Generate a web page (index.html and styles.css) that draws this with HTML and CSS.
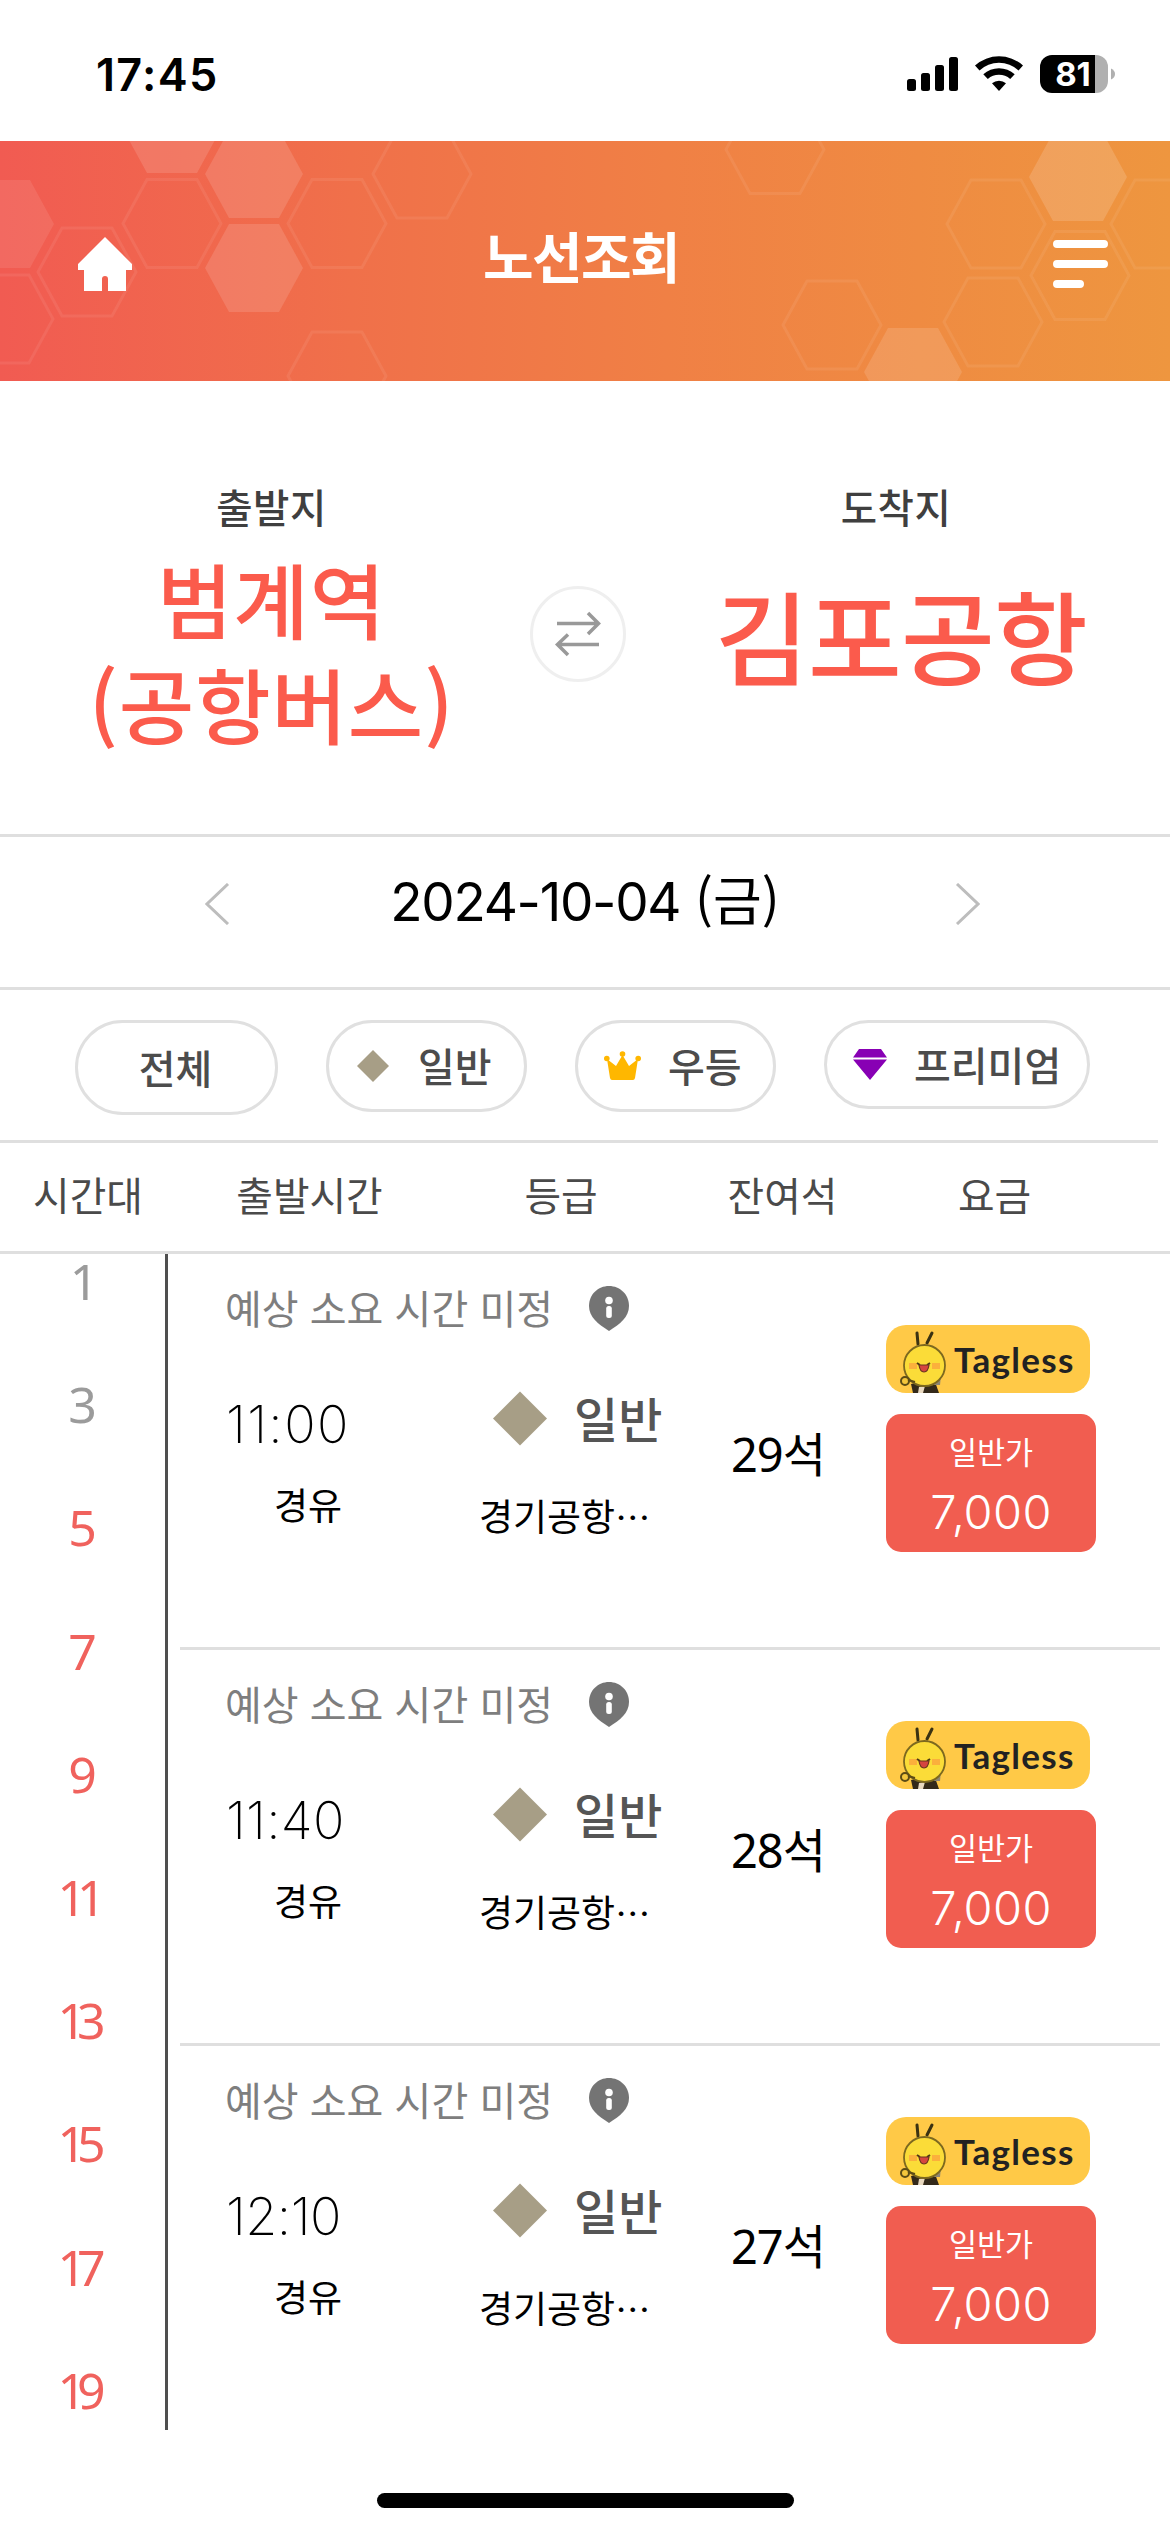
FILE: index.html
```html
<!DOCTYPE html>
<html lang="ko">
<head>
<meta charset="utf-8">
<title>노선조회</title>
<link rel="stylesheet" href="styles.css">
</head>
<body>
<svg width="0" height="0" class="defs" aria-hidden="true">
  <defs>
    <path id="hex" d="M-49 0L-25-44H25L49 0L25 44H-25Z"/>
    <symbol id="diamond" viewBox="0 0 54 54"><path d="M27 0L54 27L27 54L0 27Z" fill="#a79e86"/></symbol>
    <symbol id="info" viewBox="0 0 40 45">
      <path d="M20 0C31 0 40 8.500 40 20C40 31 31 38 20 45C9 38 0 31 0 20C0 8.500 9 0 20 0Z" fill="#747474"/>
      <circle cx="20" cy="14.500" r="3.800" fill="#fff"/><rect x="17.200" y="20" width="5.600" height="12" rx="2.500" fill="#fff"/>
    </symbol>
    <symbol id="chick" viewBox="0 0 48 68">
      <path d="M19 19L18 8M28 18L33 8" stroke="#3b3212" stroke-width="3" stroke-linecap="round" fill="none"/>
      <path d="M12 59L35 54L40 68H14Z" fill="#33291a"/>
      <path d="M20 62L26 61L24 68H19Z" fill="#e9d9c0"/>
      <path d="M36 53L42 50L41 60L35 60Z" fill="#8c8573"/>
      <circle cx="25.500" cy="40.500" r="20.500" fill="#fbdc38" stroke="#7d691f" stroke-width="1.800"/>
      <rect x="10" y="38" width="8" height="6" fill="#fbb03c"/><rect x="33" y="38" width="8" height="6" fill="#fbb03c"/>
      <path d="M18 38L21 40M28 40L31 38" stroke="#4b3b14" stroke-width="2"/>
      <path d="M20 40H30Q29 47 25 47Q21 47 20 40Z" fill="#d5453f" stroke="#6a3420" stroke-width="1.200"/>
      <circle cx="6" cy="56" r="4" fill="#f4c63c" stroke="#5d4c15" stroke-width="2"/><path d="M9 55L16 57" stroke="#5d4c15" stroke-width="2"/>
    </symbol>
  </defs>
</svg>

<div class="status">
  <span class="clock">17:45</span>
  <svg width="208" height="38" viewBox="0 0 208 38">
    <rect x="0" y="24" width="9" height="12" rx="2.500"/><rect x="14" y="18" width="9" height="18" rx="2.500"/>
    <rect x="28" y="10" width="9" height="26" rx="2.500"/><rect x="42" y="2" width="9" height="34" rx="2.500"/>
    <path d="M68 10.500A36 36 0 0 1 116 10.500L111.500 15.500A28.500 28.500 0 0 0 72.500 15.500Z"/>
    <path d="M76.300 19.200A23.500 23.500 0 0 1 107.700 19.200L103.200 24A17 17 0 0 0 80.800 24Z"/>
    <path d="M85 28.300A10.500 10.500 0 0 1 99 28.300L92 36Z"/>
    <path d="M145 0H188V38H145A12 12 0 0 1 133 26V12A12 12 0 0 1 145 0Z"/>
    <path d="M188 0H189A12 12 0 0 1 201 12V26A12 12 0 0 1 189 38H188Z" fill="#b0b0b0"/>
    <path d="M204 13.500Q208 15.500 208 19Q208 22.500 204 24.500Z" fill="#b0b0b0"/>
    <text x="166" y="31.300" class="battery" text-anchor="middle">81</text>
  </svg>
</div>

<header class="appbar">
  <svg class="pattern" width="1170" height="240" viewBox="0 141 1170 240">
    <g fill="#fff" fill-opacity=".13">
      <use href="#hex" x="172" y="129"/><use href="#hex" x="254" y="174"/><use href="#hex" x="254" y="268"/>
      <use href="#hex" x="5" y="224" fill-opacity=".09"/><use href="#hex" x="1078" y="177" fill-opacity=".15"/><use href="#hex" x="913" y="372"/>
    </g>
    <g fill="none" stroke="#fff" stroke-opacity=".07" stroke-width="3">
      <use href="#hex" x="172" y="223.500"/><use href="#hex" x="337" y="223.500"/><use href="#hex" x="422" y="174"/>
      <use href="#hex" x="87" y="272"/><use href="#hex" x="4" y="319"/><use href="#hex" x="337" y="376"/>
      <use href="#hex" x="775" y="149.500"/><use href="#hex" x="996" y="224"/><use href="#hex" x="832" y="325"/>
      <use href="#hex" x="993" y="322"/><use href="#hex" x="1080" y="275.500"/><use href="#hex" x="1160" y="224"/>
    </g>
  </svg>
  <svg class="home" width="55" height="56" viewBox="0 0 55 56"><path d="M27 1L54 28V34H48V55H30V43Q30 40 27 40Q24 40 24 43V55H6V34H0V28Z" fill="#fff"/></svg>
  <h1>노선조회</h1>
  <svg class="menu" width="55" height="50" viewBox="0 0 55 50"><path d="M4 5H51M4 25H51M4 45H27" stroke="#fff" stroke-width="8" stroke-linecap="round"/></svg>
</header>

<section class="route">
  <div class="stop from"><span class="label">출발지</span><strong><span>범계역</span><span>(공항버스)</span></strong></div>
  <svg class="swap" width="98" height="98" viewBox="0 0 98 98" fill="none"><circle cx="49" cy="49" r="46.500" stroke="#efefef" stroke-width="3"/><path d="M28 38.500H69M59 28L69.500 38.500L59 49M70 59.500H29M39 49.500L28.500 59.500L39 70" stroke="#999" stroke-width="3.500"/></svg>
  <div class="stop to"><span class="label">도착지</span><strong>김포공항</strong></div>
</section>

<section class="date">
  <svg width="25" height="42" viewBox="0 0 25 42"><path d="M23 1L2 21L23 41" fill="none" stroke="#bdbdbd" stroke-width="3"/></svg>
  <span class="day"><span class="num">2024-10-04</span> (금)</span>
  <svg width="25" height="42" viewBox="0 0 25 42"><path d="M2 1L23 21L2 41" fill="none" stroke="#bdbdbd" stroke-width="3"/></svg>
</section>

<nav class="filters">
  <a class="pill all">전체</a>
  <a class="pill normal"><svg width="32" height="32"><use href="#diamond"/></svg><span>일반</span></a>
  <a class="pill first"><svg width="37" height="30" viewBox="0 0 37 30"><g fill="#ffb700"><circle cx="2.800" cy="7.500" r="2.800"/><circle cx="18.500" cy="3" r="2.800"/><circle cx="34.200" cy="7.500" r="2.800"/><path d="M3 8L12 15L18.500 4L25 15L34 8L31 27Q30.500 29 29 29H8Q6.500 29 6 27Z"/></g></svg><span>우등</span></a>
  <a class="pill premium"><svg width="34" height="31" viewBox="0 0 34 31"><path d="M6 0H28L34 8.500H0ZM0 10.500H34L17 31Z" fill="#8800b4"/></svg><span>프리미엄</span></a>
</nav>

<div class="thead"><span>시간대</span><span>출발시간</span><span>등급</span><span>잔여석</span><span>요금</span></div>

<main class="timetable">
  <ol class="hours">
    <li class="past">1</li><li class="past">3</li><li>5</li><li>7</li><li>9</li>
    <li class="two">11</li><li class="two">13</li><li class="two">15</li><li class="two">17</li><li class="two">19</li>
  </ol>
  <div class="buses">
    <article class="bus">
      <p class="duration"><span>예상 소요 시간 미정</span><svg width="40" height="45"><use href="#info"/></svg></p>
      <div class="depart"><time class="wide">11:00</time><span>경유</span></div>
      <div class="grade"><b><svg width="54" height="55"><use href="#diamond"/></svg>일반</b><span>경기공항<i>⋯</i></span></div>
      <div class="seats">29<em>석</em></div>
      <div class="fare"><div class="tagless"><svg width="48" height="68"><use href="#chick"/></svg>Tagless</div><div class="price"><small>일반가</small><span>7<i>,</i>000</span></div></div>
    </article>
    <article class="bus">
      <p class="duration"><span>예상 소요 시간 미정</span><svg width="40" height="45"><use href="#info"/></svg></p>
      <div class="depart"><time class="mid">11:40</time><span>경유</span></div>
      <div class="grade"><b><svg width="54" height="55"><use href="#diamond"/></svg>일반</b><span>경기공항<i>⋯</i></span></div>
      <div class="seats">28<em>석</em></div>
      <div class="fare"><div class="tagless"><svg width="48" height="68"><use href="#chick"/></svg>Tagless</div><div class="price"><small>일반가</small><span>7<i>,</i>000</span></div></div>
    </article>
    <article class="bus">
      <p class="duration"><span>예상 소요 시간 미정</span><svg width="40" height="45"><use href="#info"/></svg></p>
      <div class="depart"><time>12:10</time><span>경유</span></div>
      <div class="grade"><b><svg width="54" height="55"><use href="#diamond"/></svg>일반</b><span>경기공항<i>⋯</i></span></div>
      <div class="seats">27<em>석</em></div>
      <div class="fare"><div class="tagless"><svg width="48" height="68"><use href="#chick"/></svg>Tagless</div><div class="price"><small>일반가</small><span>7<i>,</i>000</span></div></div>
    </article>
  </div>
</main>
<div class="home-indicator"></div>
</body>
</html>
```

FILE: styles.css
```css
* { box-sizing: border-box; margin: 0; padding: 0; }
body {
  width: 1170px;
  height: 2532px;
  overflow: hidden;
  background: #fff;
  color: #000;
  font-family: "Noto Sans CJK KR", sans-serif;
  display: flex;
  flex-direction: column;
}
svg { display: block; flex: none; }
.defs { position: absolute; }
i, em { font-style: normal; }

/* status bar */
.status { height: 141px; flex: none; padding: 55px 55px 0 96px; display: flex; justify-content: space-between; }
.clock { font: 600 45px/40px Inter, sans-serif; letter-spacing: 1.300px; }
.battery { font: 700 33px Inter, sans-serif; fill: #fff; }

/* app bar */
.appbar {
  position: relative;
  height: 240px;
  flex: none;
  padding: 0 62px 0 78px;
  display: flex;
  justify-content: space-between;
  align-items: center;
  background: linear-gradient(90deg, #f15b52 0%, #f0704a 30%, #f08045 57%, #ee963f 100%);
}
.pattern { position: absolute; left: 0; top: 0; }
.home, .menu, .appbar h1 { position: relative; }
.home { margin-top: 6px; }
.menu { margin-top: 6px; }
.appbar h1 { color: #fff; font-size: 55px; line-height: 70px; font-weight: 700; letter-spacing: -1.600px; margin: -15px 24px 0 0; }

/* route */
.route { height: 456px; flex: none; border-bottom: 3px solid #dfdfdf; display: grid; grid-template-columns: 529px 98px 1fr; padding-top: 98px; }
.stop { display: flex; flex-direction: column; align-items: center; }
.label { font-size: 39.500px; line-height: 54px; font-weight: 500; color: #3f3f3f; letter-spacing: .5px; }
.stop strong { color: #fb5b4c; font-weight: 500; text-align: center; white-space: nowrap; }
.stop strong span { display: block; }
.from { padding-left: 14px; }
.from strong { font-size: 82px; line-height: 105px; margin-top: 12px; letter-spacing: .9px; }
.to { padding-left: 5px; }
.to .label { padding-right: 10px; }
.to strong { font-size: 102px; line-height: 120px; margin-top: 41px; letter-spacing: -.8px; }
.swap { margin-top: 106px; }

/* date */
.date { height: 153px; flex: none; border-bottom: 3px solid #dfdfdf; display: flex; justify-content: space-between; align-items: center; padding: 0 190px 16px 205px; font-size: 53px; line-height: 70px; }
.day { margin: -9px 15px 0 0; }
.date .num { font-family: Inter, sans-serif; font-size: 53px; letter-spacing: -1.300px; }

/* grade filter */
.filters { width: 1158px; height: 153px; flex: none; border-bottom: 3px solid #dfdfdf; padding: 30px 0 0 75px; display: flex; align-items: flex-start; gap: 48px; }
.pill { display: flex; align-items: center; border: 3px solid #e0e0e0; border-radius: 48px; font-size: 40px; line-height: 56px; font-weight: 500; color: #4c4c4c; white-space: nowrap; }
.pill span { margin-top: -2px; }
.all { width: 203px; height: 95px; justify-content: center; padding: 0 2px 1px 0; }
.normal { width: 201px; height: 92px; padding-left: 28px; gap: 29px; }
.first { width: 201px; height: 92px; padding-left: 26px; gap: 27px; }
.premium { width: 266px; height: 89px; padding-left: 26px; gap: 27px; }

/* table head */
.thead { height: 111px; flex: none; border-bottom: 3px solid #dfdfdf; display: grid; grid-template-columns: 176px 267px 236px 207px 217px; padding-bottom: 6px; align-items: center; text-align: center; font-size: 39.800px; line-height: 56px; color: #4a4a4a; }

/* timetable */
.timetable { height: 1176px; flex: none; display: flex; }
.hours { width: 168px; border-right: 3px solid #4f4f4f; list-style: none; font: 400 50px/55px "Noto Sans", sans-serif; color: #f0625d; text-align: center; }
.hours li { height: 123.200px; }
.hours .past { color: #9b9b9b; }
.hours .two { letter-spacing: -9px; padding-right: 11px; }
.hours li:first-child { padding-left: 3px; }
.buses { margin-left: 12px; width: 980px; }
.bus { height: 396px; border-bottom: 3px solid #dfdfdf; display: grid; grid-template-columns: 264px 256px 186px 274px; grid-template-rows: 110px 1fr; }
.bus:last-child { border-bottom: 0; }
.duration { grid-area: 1 / 1 / 2 / 4; padding-left: 45px; display: flex; align-items: center; gap: 36px; font-size: 40px; line-height: 56px; color: #7e7e7e; font-weight: 400; white-space: nowrap; }
.duration span { margin-top: -5px; }
.duration svg { margin-top: -1px; }
.depart { grid-area: 2 / 1; padding: 30px 0 0 46px; display: flex; flex-direction: column; }
.depart time { font: 200 52px/62px Inter, sans-serif; letter-spacing: -.5px; }
.depart .wide { letter-spacing: 1.400px; }
.depart .mid { letter-spacing: .3px; }
.depart span { font-size: 37px; line-height: 50px; margin-top: 23px; padding-left: 48px; font-weight: 400; }
.grade { grid-area: 2 / 2; padding: 18px 0 0 36px; }
.grade b { display: flex; align-items: center; gap: 27px; padding-left: 13px; font-size: 48px; line-height: 70px; font-weight: 500; color: #555; }
.grade b svg { margin-top: 3px; }
.grade span { display: block; margin-top: 38px; font-size: 37px; line-height: 50px; font-weight: 400; white-space: nowrap; margin-left: -1px; }
.grade i { font-size: 35px; }
.seats { grid-area: 2 / 3; padding: 55px 30px 0 0; text-align: center; font: 400 47px/70px "Noto Sans", "Noto Sans CJK KR", sans-serif; letter-spacing: -1px; }
.fare { grid-area: 1 / 4 / 3 / 5; padding-top: 71px; }
.tagless { width: 204px; height: 68px; border-radius: 20px; background: #ffc947; display: flex; padding-left: 13px; gap: 7px; font: 700 35px/68px Lato, sans-serif; letter-spacing: 1.300px; color: #222; }
.price { width: 210px; height: 138px; margin-top: 21px; border-radius: 15px; background: #f15d50; color: #fff; display: flex; flex-direction: column; align-items: center; padding: 16px 0 0 0; }
.price small { font-size: 30.500px; line-height: 42px; font-weight: 400; }
.price span { font: 300 47px/56px Inter, sans-serif; margin-top: 12px; letter-spacing: .4px; }
.price i { margin: 0 -2px 0 -5px; }

.home-indicator { width: 417px; height: 15px; border-radius: 8px; background: #000; margin: 63px 0 0 377px; }
```
